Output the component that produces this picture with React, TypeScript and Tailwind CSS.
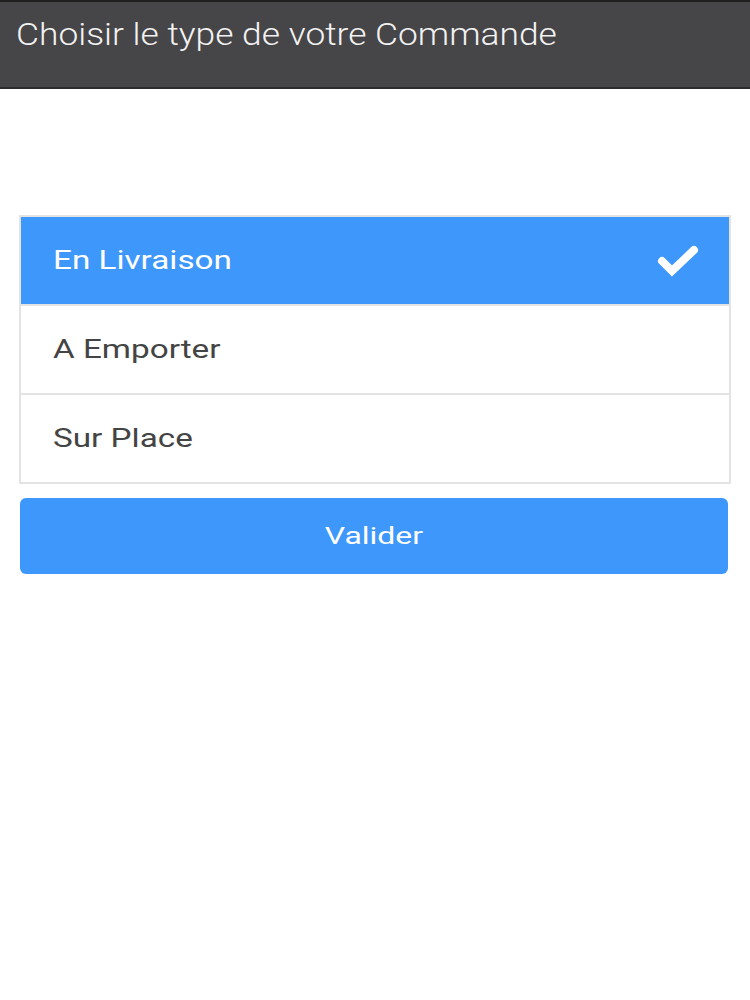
import { useState } from "react";

export default function App() {
  const options = ["En Livraison", "A Emporter", "Sur Place"];
  const [selected, setSelected] = useState(0);

  return (
    <div className="min-h-[1000px] w-[750px] bg-white font-['Roboto',sans-serif]">
      {/* Header */}
      <div className="h-[89px] border-t-2 border-b-2 border-t-[#1f1f20] border-b-[#2b2a2c] bg-[#464547] pl-[16px] pt-[16px]">
        <h1 className="inline-block origin-left scale-x-[1.105] text-[32px] leading-[32px] font-light text-[#f2f2f2]">
          Choisir le type de votre Commande
        </h1>
      </div>

      <div className="px-[19px] pt-[126px]">
        {/* Options */}
        <div className="border-2 border-[#e3e3e3]">
          {options.map((opt, i) => (
            <button
              key={opt}
              type="button"
              onClick={() => setSelected(i)}
              className={
                "flex w-full items-center justify-between pl-[32px] pr-[27px] text-left text-[25px] leading-[25px] " +
                (i > 0 ? "h-[89px] border-t-2 border-[#e3e3e3] " : "h-[87px] ") +
                (selected === i
                  ? "bg-[#3e97fa] text-white"
                  : "bg-white text-[#444]")
              }
            >
              <span className="inline-block origin-left scale-x-[1.33]">
                {opt}
              </span>
              {selected === i && (
                <svg width="48" height="34" viewBox="0 0 48 34" fill="none">
                  <path
                    d="M8 17 L18 27 L40 6"
                    stroke="white"
                    strokeWidth="8"
                    strokeLinecap="round"
                    strokeLinejoin="miter"
                  />
                </svg>
              )}
            </button>
          ))}
        </div>

        {/* Submit */}
        <button
          type="button"
          className="mt-[14px] ml-px flex h-[76px] w-[708px] items-center justify-center rounded-[6px] bg-[#3e97fa] text-white"
        >
          <span className="inline-block scale-x-[1.33] text-[24px] leading-[24px]">
            Valider
          </span>
        </button>
      </div>
    </div>
  );
}
